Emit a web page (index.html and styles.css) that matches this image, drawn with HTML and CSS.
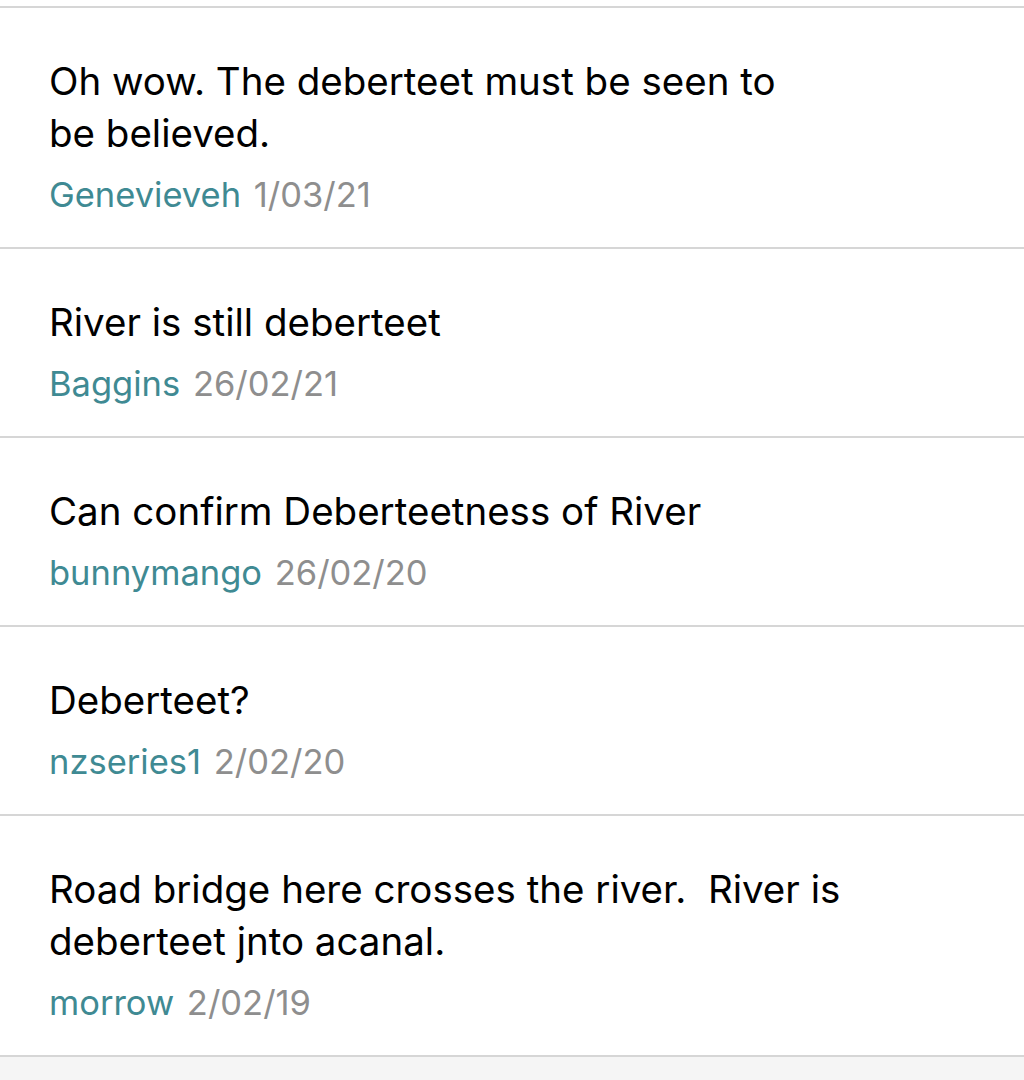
FILE: index.html
```html
<!DOCTYPE html>
<html>
<head>
<meta charset="utf-8">
<link rel="stylesheet" href="styles.css">
</head>
<body>
<div class="top-gap"></div>
<ul class="comments">
  <li class="comment">
    <p class="text">Oh wow. The deberteet must be seen to<br>be believed.</p>
    <p class="meta"><span class="user">Genevieveh</span> <span class="date">1/03/21</span></p>
  </li>
  <li class="comment">
    <p class="text">River is still deberteet</p>
    <p class="meta"><span class="user">Baggins</span> <span class="date">26/02/21</span></p>
  </li>
  <li class="comment">
    <p class="text">Can confirm Deberteetness of River</p>
    <p class="meta"><span class="user">bunnymango</span> <span class="date">26/02/20</span></p>
  </li>
  <li class="comment">
    <p class="text">Deberteet?</p>
    <p class="meta"><span class="user">nzseries1</span> <span class="date">2/02/20</span></p>
  </li>
  <li class="comment">
    <p class="text">Road bridge here crosses the river.&nbsp; River is<br>deberteet jnto acanal.</p>
    <p class="meta"><span class="user">morrow</span> <span class="date">2/02/19</span></p>
  </li>
</ul>
<div class="footer"></div>
</body>
</html>
```
FILE: styles.css
```css
html, body {
  margin: 0;
  padding: 0;
  background: #ffffff;
  font-family: Inter, "Liberation Sans", sans-serif;
}
.top-gap {
  height: 6px;
}
.comments {
  list-style: none;
  margin: 0;
  padding: 0;
  border-top: 2px solid #d6d6d6;
}
.comment {
  padding: 47px 40px 30px 49px;
  border-bottom: 2px solid #d6d6d6;
}
.text {
  margin: 0;
  font-size: 38.5px;
  line-height: 52px;
  color: #000000;
}
.meta {
  margin: 14px 0 0 0;
  font-size: 34.5px;
  line-height: 44px;
}
.user {
  color: #3f8a93;
}
.date {
  margin-left: 3px;
  color: #8e8e8e;
}
.footer {
  background: #f5f5f5;
  height: 40px;
}
```
